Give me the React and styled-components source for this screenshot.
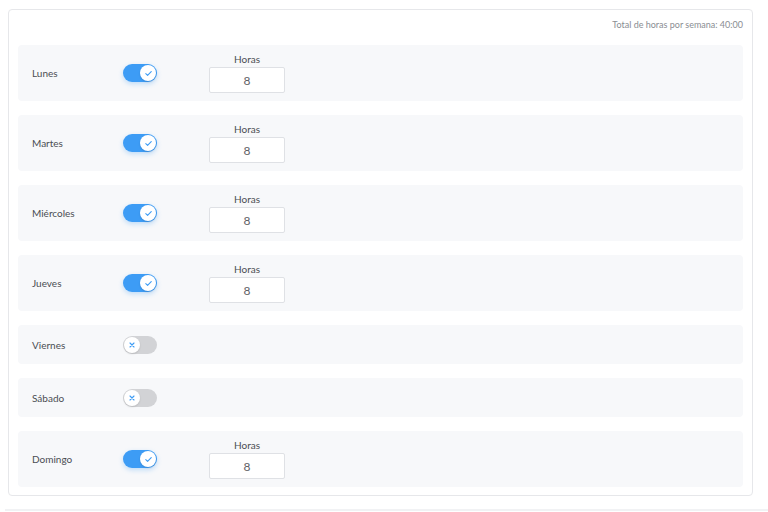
import React from 'react';
import styled, { createGlobalStyle } from 'styled-components';

const GlobalStyle = createGlobalStyle`
  body {
    margin: 0;
    background: #fff;
    font-family: Lato, "Open Sans", sans-serif;
  }
`;

const Page = styled.div`
  padding: 9px 15px 0 8px;
`;

const Card = styled.section`
  border: 1px solid #e6e7ea;
  border-radius: 4px;
  padding: 0 9px 8px;
  display: flex;
  flex-direction: column;
  gap: 14px;
`;

const Total = styled.div`
  text-align: right;
  font-size: 9px;
  line-height: 12px;
  color: #8a8d92;
  padding-top: 9px;
`;

const Row = styled.div`
  box-sizing: border-box;
  min-height: 39px;
  padding: 8px 14px;
  background: #f7f8fa;
  border-radius: 4px;
  display: flex;
  align-items: center;
`;

const DayName = styled.div`
  width: 91px;
  font-size: 10px;
  color: #4a4d52;
`;

const Toggle = styled.div`
  position: relative;
  width: 34px;
  height: 18px;
  border-radius: 9px;
  background: ${p => (p.on ? '#3d9cf5' : '#d2d3d6')};
  box-shadow: ${p => (p.on ? '0 2px 5px rgba(61, 156, 245, 0.3)' : 'none')};
`;

const Knob = styled.span`
  position: absolute;
  top: 1px;
  left: ${p => (p.on ? '17px' : '1px')};
  width: 16px;
  height: 16px;
  border-radius: 50%;
  background: #fff;
  display: flex;
  align-items: center;
  justify-content: center;
  box-shadow: 0 1px 2px rgba(0, 0, 0, 0.12);
`;

const HoursGroup = styled.div`
  margin-left: 52px;
  display: flex;
  flex-direction: column;
  align-items: center;
  gap: 2px;
`;

const HoursLabel = styled.div`
  font-size: 10px;
  line-height: 12px;
  color: #4a4d52;
`;

const HoursInput = styled.div`
  box-sizing: border-box;
  width: 76px;
  height: 26px;
  background: #fff;
  border: 1px solid #dfe1e5;
  border-radius: 2px;
  display: flex;
  align-items: center;
  justify-content: center;
  font-size: 12px;
  color: #5f6267;
`;

const NextCard = styled.div`
  margin: 13px -15px 0 -3px;
  border-top: 2px solid #f1f2f4;
  height: 4px;
`;

const Check = () => (
  <svg width="9" height="9" viewBox="0 0 10 10">
    <path d="M2 5.2l2 2 4-4.4" fill="none" stroke="#3d9cf5" strokeWidth="1.2" strokeLinecap="round" strokeLinejoin="round" />
  </svg>
);

const Cross = () => (
  <svg width="8" height="8" viewBox="0 0 10 10">
    <path d="M2.5 2.5l5 5M7.5 2.5l-5 5" fill="none" stroke="#3d9cf5" strokeWidth="1.4" strokeLinecap="round" />
  </svg>
);

const days = [
  { name: 'Lunes', on: true, hours: 8 },
  { name: 'Martes', on: true, hours: 8 },
  { name: 'Miércoles', on: true, hours: 8 },
  { name: 'Jueves', on: true, hours: 8 },
  { name: 'Viernes', on: false },
  { name: 'Sábado', on: false },
  { name: 'Domingo', on: true, hours: 8 },
];

const App = () => (
  <Page>
    <GlobalStyle />
    <Card>
      <Total>Total de horas por semana: 40:00</Total>
      {days.map(day => (
        <Row key={day.name}>
          <DayName>{day.name}</DayName>
          <Toggle on={day.on ? 1 : 0}>
            <Knob on={day.on ? 1 : 0}>{day.on ? <Check /> : <Cross />}</Knob>
          </Toggle>
          {day.on && (
            <HoursGroup>
              <HoursLabel>Horas</HoursLabel>
              <HoursInput>{day.hours}</HoursInput>
            </HoursGroup>
          )}
        </Row>
      ))}
    </Card>
    <NextCard />
  </Page>
);

export default App;
